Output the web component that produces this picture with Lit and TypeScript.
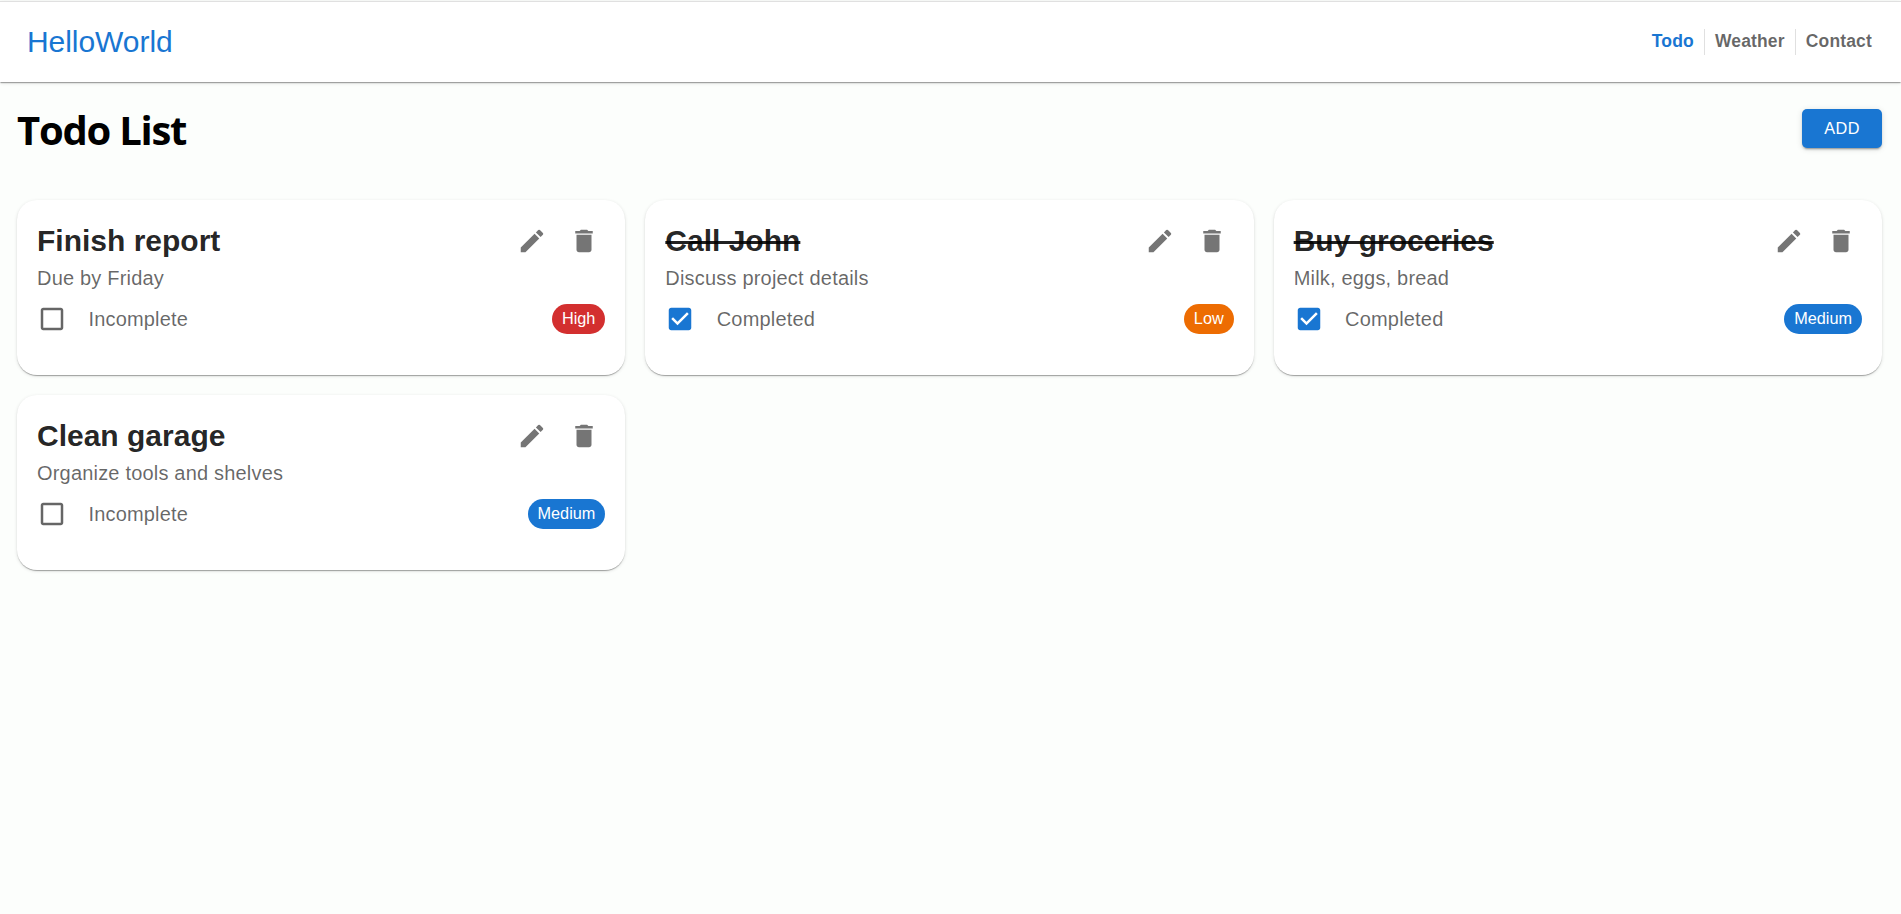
import { LitElement, html, css, svg } from "lit";
import { customElement, property, state } from "lit/decorators.js";
import { classMap } from "lit/directives/class-map.js";

type Priority = "High" | "Medium" | "Low";

interface Todo {
  id: number;
  title: string;
  description: string;
  completed: boolean;
  priority: Priority;
}

const paths = {
  edit: svg`<path d="M3 17.25V21h3.75L17.81 9.94l-3.75-3.75zM20.71 7.04c.39-.39.39-1.02 0-1.41l-2.34-2.34a.9959.9959 0 0 0-1.41 0l-1.83 1.83 3.75 3.75z"/>`,
  remove: svg`<path d="M6 19c0 1.1.9 2 2 2h8c1.1 0 2-.9 2-2V7H6zM19 4h-3.5l-1-1h-5l-1 1H5v2h14z"/>`,
  unchecked: svg`<path d="M19 5v14H5V5h14m0-2H5c-1.1 0-2 .9-2 2v14c0 1.1.9 2 2 2h14c1.1 0 2-.9 2-2V5c0-1.1-.9-2-2-2z"/>`,
  checked: svg`<path d="M19 3H5c-1.11 0-2 .9-2 2v14c0 1.1.89 2 2 2h14c1.11 0 2-.9 2-2V5c0-1.1-.89-2-2-2zm-9 14l-5-5 1.41-1.41L10 14.17l7.59-7.59L19 8l-9 9z"/>`,
};

const icon = (name: keyof typeof paths) =>
  html`<svg class="icon" viewBox="0 0 24 24" aria-hidden="true">${paths[name]}</svg>`;

@customElement("todo-card")
class TodoCard extends LitElement {
  @property({ attribute: false }) todo!: Todo;

  static styles = css`
    :host {
      display: block;
      box-sizing: border-box;
      height: 175px;
      padding: 20px;
      border-radius: 20px;
      background: #fff;
      color: rgba(0, 0, 0, 0.87);
      box-shadow: 0 2px 1px -1px rgba(0, 0, 0, 0.2),
        0 1px 1px 0 rgba(0, 0, 0, 0.14),
        0 1px 3.75px 0 rgba(0, 0, 0, 0.12);
    }
    .head, .foot {
      display: flex;
      align-items: center;
      justify-content: space-between;
    }
    .head { height: 42px; }
    .title {
      margin: 0;
      font-size: 30px;
      font-weight: 700;
      line-height: 40px;
    }
    .done { text-decoration: line-through; }
    .actions {
      display: flex;
      gap: 2px;
      margin-right: -3.6px;
    }
    button {
      display: flex;
      padding: 0 10px;
      border: 0;
      background: none;
      color: rgba(0, 0, 0, 0.54);
      cursor: pointer;
    }
    .icon {
      width: 30px;
      height: 30px;
      fill: currentColor;
    }
    .text {
      margin: 0;
      font-size: 20px;
      line-height: 30px;
      letter-spacing: 0.19px;
      color: rgba(0, 0, 0, 0.6);
    }
    .description { padding-top: 1px; }
    .foot { height: 52px; }
    .status {
      display: flex;
      align-items: center;
      gap: 11.4px;
    }
    .check {
      padding: 0 10px 0 0;
      color: rgba(0, 0, 0, 0.6);
    }
    .check.on { color: #1976d2; }
    .chip {
      height: 30px;
      padding: 0 10px;
      border-radius: 15px;
      font-size: 16.25px;
      line-height: 29px;
      color: #fff;
    }
    .high { background: #d32f2f; }
    .medium { background: #1976d2; }
    .low { background: #ed6c02; }
  `;

  private toggle() {
    this.dispatchEvent(new CustomEvent("toggle"));
  }

  private remove() {
    this.dispatchEvent(new CustomEvent("remove"));
  }

  render() {
    const { title, description, completed, priority } = this.todo;
    return html`
      <div class="head">
        <h2 class=${classMap({ title: true, done: completed })}>${title}</h2>
        <div class="actions">
          <button>${icon("edit")}</button>
          <button @click=${this.remove}>${icon("remove")}</button>
        </div>
      </div>
      <p class="text description">${description}</p>
      <div class="foot">
        <div class="status">
          <button class=${classMap({ check: true, on: completed })} @click=${this.toggle}>
            ${icon(completed ? "checked" : "unchecked")}
          </button>
          <span class="text">${completed ? "Completed" : "Incomplete"}</span>
        </div>
        <span class="chip ${priority.toLowerCase()}">${priority}</span>
      </div>
    `;
  }
}

@customElement("app-root")
class AppRoot extends LitElement {
  @state() private todos: Todo[] = [
    { id: 1, title: "Finish report", description: "Due by Friday", completed: false, priority: "High" },
    { id: 2, title: "Call John", description: "Discuss project details", completed: true, priority: "Low" },
    { id: 3, title: "Buy groceries", description: "Milk, eggs, bread", completed: true, priority: "Medium" },
    { id: 4, title: "Clean garage", description: "Organize tools and shelves", completed: false, priority: "Medium" },
  ];

  static styles = css`
    :host {
      display: flex;
      flex-direction: column;
      box-sizing: border-box;
      min-height: 100vh;
      padding-top: 1px;
      background: #fcfefc;
      font-family: "Liberation Sans", Arial, sans-serif;
    }
    .bar {
      display: flex;
      align-items: center;
      justify-content: space-between;
      box-sizing: border-box;
      height: 81px;
      padding: 0 19px 0 27px;
      border-top: 1px solid #e0e0e0;
      background: #fff;
      box-shadow: 0 2px 1px -1px rgba(0, 0, 0, 0.2),
        0 1px 1px 0 rgba(0, 0, 0, 0.14),
        0 1px 3.75px 0 rgba(0, 0, 0, 0.12);
    }
    .brand {
      padding-bottom: 1px;
      font-size: 30px;
      line-height: 40px;
      letter-spacing: -0.05px;
      color: #1976d2;
    }
    nav { display: flex; }
    .link {
      padding: 0 10px 2px;
      font-size: 17.5px;
      font-weight: 700;
      line-height: 24px;
      letter-spacing: 0.16px;
      color: rgba(0, 0, 0, 0.6);
      text-decoration: none;
    }
    .link + .link { border-left: 1px solid #e0e0e0; }
    .active { color: #1976d2; }
    main { padding: 27px 19px 0 17px; }
    .top {
      display: flex;
      align-items: flex-start;
      justify-content: space-between;
      height: 90.6px;
    }
    h1 {
      margin: -6px 0 0;
      font-family: "Segoe UI", "Open Sans", sans-serif;
      font-size: 40px;
      font-weight: 700;
      line-height: 54px;
      letter-spacing: -1.25px;
      color: #000;
    }
    .add {
      width: 80px;
      height: 39px;
      padding: 0 0 1px;
      border: 0;
      border-radius: 5px;
      background: #1976d2;
      color: #fff;
      font: 16.25px/38px "Liberation Sans", Arial, sans-serif;
      letter-spacing: 0.46px;
      box-shadow: 0 3px 1px -2px rgba(0, 0, 0, 0.2),
        0 2px 2px 0 rgba(0, 0, 0, 0.14),
        0 1px 6px 0 rgba(0, 0, 0, 0.12);
    }
    .grid {
      display: grid;
      grid-template-columns: repeat(3, 1fr);
      gap: 20px;
    }
  `;

  private toggle(id: number) {
    this.todos = this.todos.map((t) => (t.id === id ? { ...t, completed: !t.completed } : t));
  }

  private remove(id: number) {
    this.todos = this.todos.filter((t) => t.id !== id);
  }

  render() {
    return html`
      <header class="bar">
        <span class="brand">HelloWorld</span>
        <nav>
          <a class="link active">Todo</a>
          <a class="link">Weather</a>
          <a class="link">Contact</a>
        </nav>
      </header>
      <main>
        <div class="top">
          <h1>Todo List</h1>
          <button class="add">ADD</button>
        </div>
        <section class="grid">
          ${this.todos.map(
            (t) => html`<todo-card
              .todo=${t}
              @toggle=${() => this.toggle(t.id)}
              @remove=${() => this.remove(t.id)}
            ></todo-card>`
          )}
        </section>
      </main>
    `;
  }
}
